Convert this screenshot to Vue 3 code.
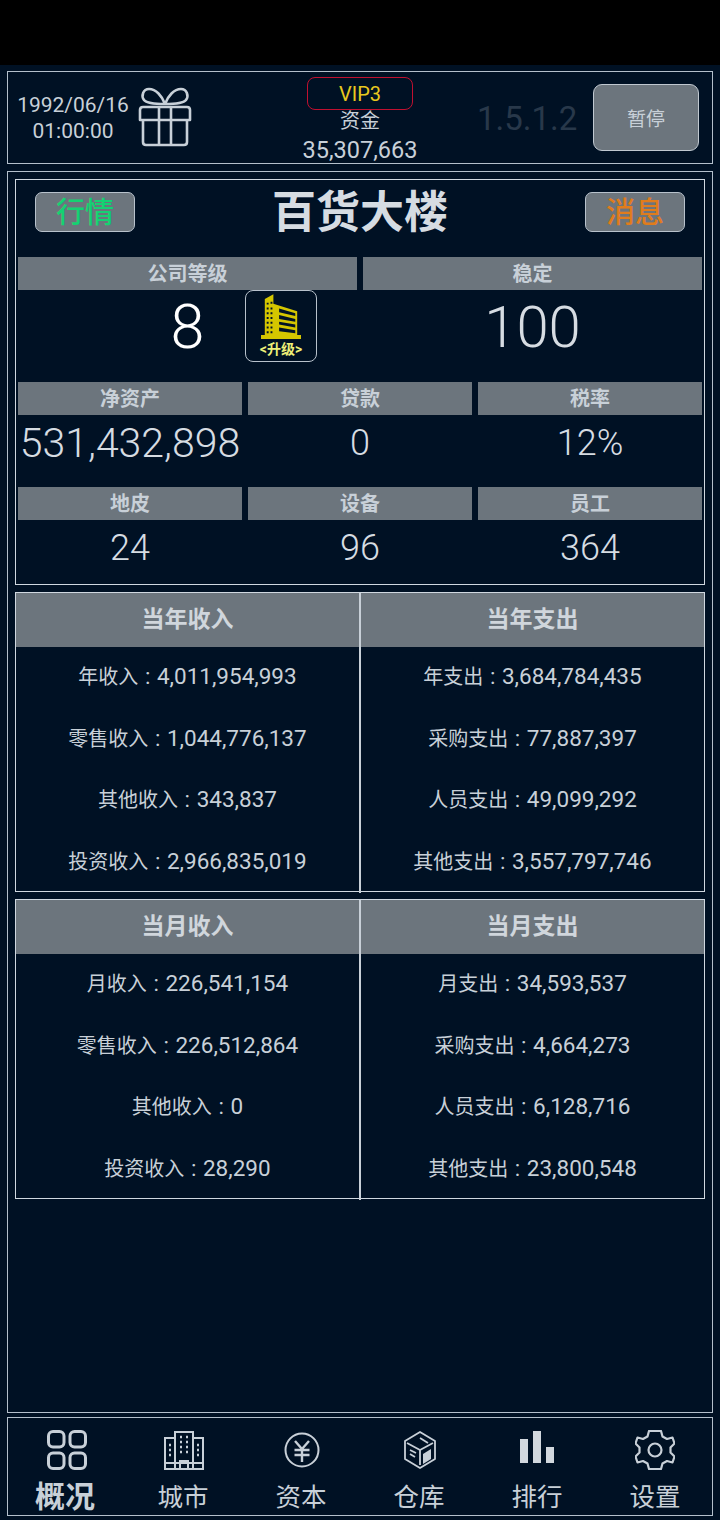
<template>
  <div class="screen">
    <div class="status"></div>

    <!-- Top bar -->
    <header class="topbar">
      <div class="date">
        <div>1992/06/16</div>
        <div>01:00:00</div>
      </div>
      <svg class="gift" viewBox="0 0 54 60" fill="none" stroke="#c8d0d8" stroke-width="2.6" stroke-linejoin="round">
        <path d="M27 17C24 9 18 2 11 2 5 2 3 9 6 13 9 17 20 17 27 17ZM27 17C30 9 36 2 43 2 49 2 51 9 48 13 45 17 34 17 27 17Z" />
        <path d="M2 23q0-3 3-3H49q3 0 3 3V33H2Z" />
        <path d="M5 33V55q0 3 3 3H46q3 0 3-3V33" />
        <path d="M21 20V58M33 20V58" />
      </svg>
      <div class="money">
        <div class="vip">VIP3</div>
        <div class="money-label">资金</div>
        <div class="money-value">35,307,663</div>
      </div>
      <div class="version">1.5.1.2</div>
      <button class="pause">暂停</button>
    </header>

    <main class="main">
      <section class="company">
        <div class="title-row">
          <button class="tag tag-green">行情</button>
          <h1 class="title">百货大楼</h1>
          <button class="tag tag-orange">消息</button>
        </div>

        <div class="grid-two">
          <div class="label">公司等级</div>
          <div class="label">稳定</div>
          <div class="value-big level-cell">
            <span>8</span>
            <div class="upgrade">
              <svg class="tower" viewBox="0 0 42 48">
                <path fill="#d4c600" d="M4 5 13 0V10L38 18V43H42V47H0V43H4Z" />
                <g fill="#001226">
                  <path d="M19 15 36 20V23L19 19ZM19 22 36 26V29L19 26ZM19 29 36 32V35L19 32ZM19 35 36 38V41L19 39Z" />
                  <path d="M6 9h2v2H6ZM10 8h2v2h-2ZM6 14h2v2H6ZM10 14h2v2h-2ZM6 19h2v2H6ZM10 19h2v2h-2ZM6 24h2v2H6ZM10 24h2v2h-2ZM6 29h2v2H6ZM10 29h2v2h-2ZM6 34h2v2H6ZM10 34h2v2h-2ZM6 39h2v2H6ZM10 39h2v2h-2Z" />
                </g>
              </svg>
              <span class="upgrade-text">&lt;升级&gt;</span>
            </div>
          </div>
          <div class="value-big">100</div>
        </div>

        <div class="grid-three">
          <div class="label">净资产</div>
          <div class="label">贷款</div>
          <div class="label">税率</div>
          <div class="value value-wide">531,432,898</div>
          <div class="value">0</div>
          <div class="value">12%</div>
        </div>

        <div class="grid-three">
          <div class="label">地皮</div>
          <div class="label">设备</div>
          <div class="label">员工</div>
          <div class="value value-last">24</div>
          <div class="value value-last">96</div>
          <div class="value value-last">364</div>
        </div>
      </section>

      <section v-for="table in tables" :key="table.left.title" class="table">
        <div v-for="col in [table.left, table.right]" :key="col.title" class="col">
          <div class="col-head">{{ col.title }}</div>
          <div v-for="row in col.rows" :key="row[0]" class="col-row">
            <span class="row-name">{{ row[0] }}</span>
            <span class="row-num"> : {{ row[1] }}</span>
          </div>
        </div>
      </section>
    </main>

    <!-- Bottom nav -->
    <nav class="nav">
      <div class="nav-item active">
        <svg class="nav-icon" viewBox="0 0 40 40" fill="none" stroke="#c8d0d8" stroke-width="3">
          <rect x="1.5" y="1.500" width="15.500" height="15.500" rx="4.500" />
          <rect x="23" y="1.500" width="15.500" height="15.500" rx="4.500" />
          <rect x="1.500" y="23" width="15.500" height="15.500" rx="4.500" />
          <rect x="23" y="23" width="15.500" height="15.500" rx="4.500" />
        </svg>
        <span>概况</span>
      </div>
      <div class="nav-item">
        <svg class="nav-icon" viewBox="0 0 40 40" fill="none" stroke="#c8d0d8" stroke-width="2">
          <path d="M1 39V8H11M29 8H39V39M0 39H40" />
          <path d="M11 39V2H29V39" />
          <path d="M1 33H39" />
          <path d="M16 39V31H24V39" />
          <path d="M16 7h2M22 7h2M16 12h2M22 12h2M16 17h2M22 17h2M16 22h2M22 22h2M5 15h2M5 20h2M5 25h2M33 15h2M33 20h2M33 25h2" stroke-width="2.400" />
        </svg>
        <span>城市</span>
      </div>
      <div class="nav-item">
        <svg class="nav-icon" viewBox="0 0 40 40" fill="none" stroke="#c8d0d8" stroke-width="2">
          <circle cx="20" cy="20" r="16.500" />
          <path d="M13 11 20 19 27 11M12.500 20H27.500M12.500 25H27.500M20 19V32" stroke-width="2.400" />
        </svg>
        <span>资本</span>
      </div>
      <div class="nav-item">
        <svg class="nav-icon" viewBox="0 0 40 40" fill="none" stroke="#c8d0d8" stroke-width="1.800" stroke-linejoin="round">
          <path d="M20 2 35 11V29L20 38 5 29V11Z" />
          <path d="M7 13 20 20 33 13M20 20V35M20 8 28 13" />
          <path d="M10 20 16 23M10 24 15 27" />
          <path fill="#c8d0d8" stroke="none" d="M23 24 31 19V29L23 34Z" />
        </svg>
        <span>仓库</span>
      </div>
      <div class="nav-item">
        <svg class="nav-icon" viewBox="0 0 40 40" fill="#d2d8de">
          <rect x="3" y="9" width="8" height="24" />
          <rect x="16" y="1" width="8" height="32" />
          <rect x="29" y="17" width="8" height="16" />
        </svg>
        <span>排行</span>
      </div>
      <div class="nav-item">
        <svg class="nav-icon" viewBox="0 0 40 40" fill="none" stroke="#c8d0d8" stroke-width="2.200" stroke-linejoin="round">
          <path d="M14 1H26L27.500 6.500 32 9 37.500 7.500 39.500 13.500 35.500 17.500V22.500L39.500 26.500 37.500 32.500 32 31 27.500 33.500 26 39H14L12.500 33.500 8 31 2.500 32.500.5 26.500 4.500 22.500V17.500L.5 13.500 2.500 7.500 8 9 12.500 6.500Z" />
          <circle cx="20" cy="20" r="6.500" />
        </svg>
        <span>设置</span>
      </div>
    </nav>
  </div>
</template>

<script setup>
const tables = [
  {
    left: {
      title: '当年收入',
      rows: [['年收入', '4,011,954,993'], ['零售收入', '1,044,776,137'], ['其他收入', '343,837'], ['投资收入', '2,966,835,019']]
    },
    right: {
      title: '当年支出',
      rows: [['年支出', '3,684,784,435'], ['采购支出', '77,887,397'], ['人员支出', '49,099,292'], ['其他支出', '3,557,797,746']]
    }
  },
  {
    left: {
      title: '当月收入',
      rows: [['月收入', '226,541,154'], ['零售收入', '226,512,864'], ['其他收入', '0'], ['投资收入', '28,290']]
    },
    right: {
      title: '当月支出',
      rows: [['月支出', '34,593,537'], ['采购支出', '4,664,273'], ['人员支出', '6,128,716'], ['其他支出', '23,800,548']]
    }
  }
]
</script>

<style>
html,
body {
  margin: 0;
  background: #001124;
}
</style>

<style scoped>
.screen {
  width: 720px;
  height: 1520px;
  overflow: hidden;
  background: #001124;
  color: #c8d0d8;
  font-family: Roboto, "Noto Sans CJK SC", sans-serif;
  display: flex;
  flex-direction: column;
}

.status {
  height: 65px;
  background: #000;
}

.topbar {
  margin: 6px 7px 0;
  height: 93px;
  box-sizing: border-box;
  border: 1px solid #b4c0cc;
  display: flex;
  align-items: center;
  position: relative;
}

.date {
  width: 130px;
  text-align: center;
  font-size: 21px;
  line-height: 26px;
}

.gift {
  width: 54px;
  height: 60px;
  margin-top: -2px;
}

.money {
  position: absolute;
  left: 278px;
  top: 5px;
  width: 148px;
  text-align: center;
}

.vip {
  width: 106px;
  height: 33px;
  margin: 0 auto;
  border: 1.500px solid #c01030;
  border-radius: 8px;
  box-sizing: border-box;
  color: #e8c81e;
  font-size: 20px;
  line-height: 32px;
}

.money-label {
  font-size: 20px;
  line-height: 26px;
  margin-top: -2px;
}

.money-value {
  font-size: 23.500px;
  line-height: 32px;
}

.version {
  position: absolute;
  left: 469px;
  top: 25px;
  font-size: 33px;
  line-height: 44px;
  color: #28384a;
}

.pause {
  position: absolute;
  right: 13px;
  top: 12px;
  width: 106px;
  height: 67px;
  border: 1.500px solid #c0c8d0;
  border-radius: 9px;
  background: #6c757d;
  color: #c8d0d8;
  font-family: inherit;
  font-size: 19px;
  padding: 0;
}

.main {
  margin: 7px 7px 0;
  height: 1242px;
  box-sizing: border-box;
  border: 1px solid #b4c0cc;
  padding: 7px;
  display: flex;
  flex-direction: column;
  gap: 7px;
}

.company {
  height: 406px;
  box-sizing: border-box;
  border: 1px solid #d0d8e0;
  padding: 0 2px;
}

.title-row {
  height: 77px;
  display: flex;
  align-items: center;
  justify-content: space-between;
  padding: 0 17px;
}

.tag {
  width: 100px;
  height: 40px;
  margin-top: -13px;
  padding: 2px 0 0;
  border: 1.500px solid #b8c2cc;
  border-radius: 7px;
  background: #6c757d;
  font-family: inherit;
  font-size: 29px;
  font-weight: 500;
  line-height: 36px;
}

.tag-green {
  color: #14d272;
}

.tag-orange {
  color: #e07c1c;
}

.title {
  margin: -12px 0 0;
  font-size: 44px;
  line-height: 50px;
  font-weight: 700;
  color: #d6dce2;
}

.grid-two {
  display: grid;
  grid-template-columns: 339px 339px;
  column-gap: 6px;
}

.grid-three {
  display: grid;
  grid-template-columns: 224px 224px 224px;
  column-gap: 6px;
}

.label {
  height: 33px;
  background: #6c757d;
  color: #c8d0d8;
  font-size: 20px;
  font-weight: 700;
  line-height: 34px;
  text-align: center;
}

.value-big {
  height: 92px;
  font-size: 58px;
  font-weight: 300;
  line-height: 74px;
  text-align: center;
  color: #d6dce2;
}

.level-cell {
  display: flex;
  justify-content: center;
  position: relative;
  font-size: 61px;
  color: #fff;
}

.upgrade {
  position: absolute;
  left: 227px;
  top: 0;
  width: 72px;
  height: 72px;
  box-sizing: border-box;
  border: 1px solid #b8c2cc;
  border-radius: 8px;
  display: flex;
  flex-direction: column;
  align-items: center;
}

.tower {
  width: 40px;
  height: 46px;
  margin-top: 3px;
}

.upgrade-text {
  color: #eef078;
  font-size: 14px;
  font-weight: 700;
  line-height: 18px;
}

.value {
  height: 72px;
  font-size: 36px;
  font-weight: 300;
  line-height: 56px;
  text-align: center;
  color: #d6dce2;
  white-space: nowrap;
}

.value-wide {
  font-size: 41px;
}

.value-last {
  height: 63px;
}

.table {
  height: 300px;
  box-sizing: border-box;
  border: 1px solid #d0d8e0;
  display: grid;
  grid-template-columns: 343px 345px;
}

.col + .col {
  border-left: 2px solid #c8d0d8;
}

.col-head {
  height: 54px;
  background: #6c757d;
  color: #d0d6dc;
  font-size: 23px;
  font-weight: 700;
  line-height: 54px;
  text-align: center;
}

.col-row {
  height: 61.500px;
  line-height: 59px;
  text-align: center;
  white-space: nowrap;
}

.row-name {
  font-size: 20px;
}

.row-num {
  font-size: 22.500px;
  white-space: pre;
  word-spacing: 1px;
}

.nav {
  margin: 4px 7px 0;
  height: 99px;
  box-sizing: border-box;
  border: 1px solid #b4c0cc;
  display: grid;
  grid-template-columns: repeat(6, 118px);
  justify-content: center;
}

.nav-item {
  display: flex;
  flex-direction: column;
  align-items: center;
  font-size: 25.500px;
  line-height: 34px;
  color: #c8d0d8;
}

.nav-item .nav-icon {
  width: 40px;
  height: 40px;
  margin-top: 12px;
  margin-bottom: 10px;
}

.nav-item:nth-child(-n+4) .nav-icon {
  margin-left: 2px;
}

.nav-item.active .nav-icon {
  margin-left: 4px;
}

.nav-item.active {
  font-size: 30px;
  font-weight: 700;
}
</style>
